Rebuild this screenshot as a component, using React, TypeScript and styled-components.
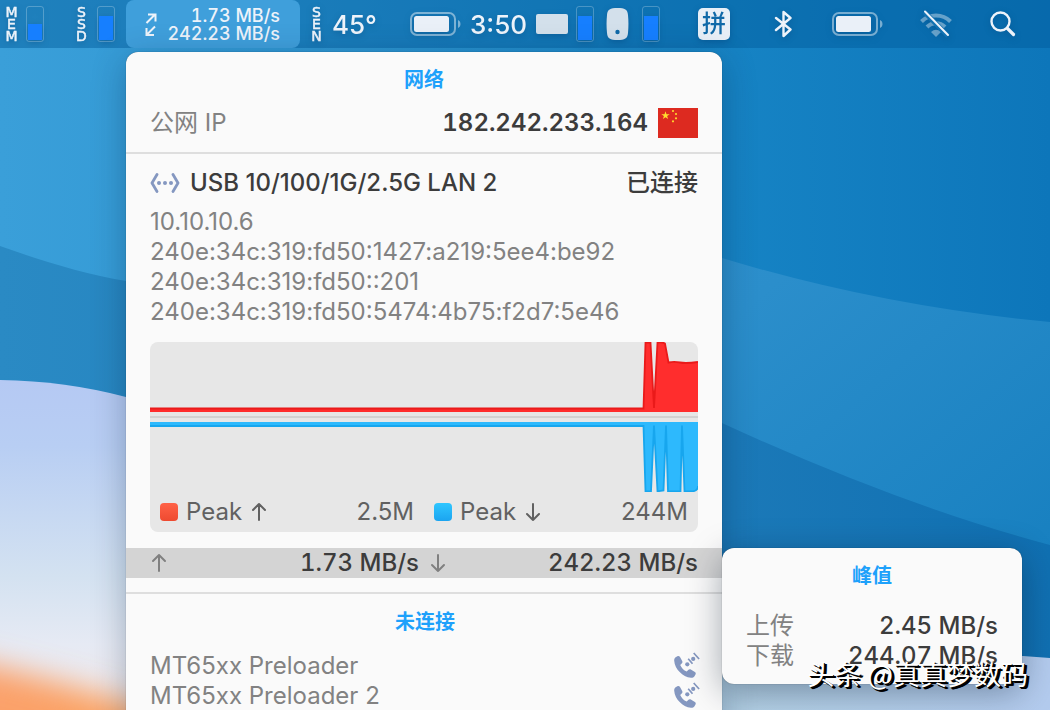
import React from "react";
import styled, { createGlobalStyle } from "styled-components";

const GlobalStyle = createGlobalStyle`
  *, *::before, *::after { box-sizing: border-box; }
  body {
    margin: 0;
    font-family: Inter, "Noto Sans CJK SC", sans-serif;
    color: #3c3c3c;
  }
  h2, h3, p, ul, dl, dt, dd { margin: 0; padding: 0; }
  ul { list-style: none; }
  button { font: inherit; color: inherit; border: 0; background: none; padding: 0; }
`;

const Desktop = styled.div`
  position: relative;
  display: flex;
  flex-direction: column;
  height: 100vh;
  overflow: hidden;
  background: #1680c2;
`;

const WallpaperSvg = styled.svg`
  position: absolute;
  inset: 0;
  width: 100%;
  height: 100%;
`;

const MenuBar = styled.nav`
  position: relative;
  flex: none;
  display: flex;
  align-items: center;
  height: 48px;
  padding-left: 6px;
  color: #edf3fa;
  background: rgba(0, 92, 156, 0.45);
`;

const MenuItem = styled.button<{ $gap?: number; $width?: number }>`
  display: flex;
  align-items: center;
  flex: none;
  height: 48px;
  margin-left: ${(p) => p.$gap ?? 0}px;
  width: ${(p) => (p.$width ? `${p.$width}px` : "auto")};
  filter: drop-shadow(0 2px 3px rgba(0, 50, 100, 0.3));
`;

const StackedLabel = styled.span`
  display: flex;
  flex-direction: column;
  align-items: center;
  width: 11px;
  font-family: "DejaVu Sans", sans-serif;
  font-size: 14px;
  line-height: 12px;
  -webkit-text-stroke: 0.5px currentColor;
`;

const Meter = styled.span<{ $gap?: number }>`
  display: flex;
  align-items: flex-end;
  width: 18px;
  height: 36px;
  margin-left: ${(p) => p.$gap ?? 0}px;
  padding: 1px;
  border: 1px solid rgba(255, 255, 255, 0.24);
  border-radius: 3px;
`;

const MeterFill = styled.span`
  width: 100%;
  background: #167fff;
`;

const NetworkItem = styled.button`
  display: flex;
  align-items: center;
  justify-content: space-between;
  flex: none;
  width: 174px;
  height: 48px;
  margin-left: 11px;
  padding: 2px 20px 0 18px;
  border-radius: 8px;
  background: #3f9fdb;
`;

const Speeds = styled.span`
  display: flex;
  flex-direction: column;
  align-items: flex-end;
  font-size: 18px;
  font-weight: 500;
  font-variant-numeric: tabular-nums;
  line-height: 18px;
`;

const MenuText = styled.span<{ $gap: number; $width: number }>`
  margin-left: ${(p) => p.$gap}px;
  width: ${(p) => p.$width}px;
  font-size: 26px;
  font-weight: 500;
  text-align: left;
  white-space: nowrap;
`;

const KeyboardGlyph = styled.span`
  width: 32px;
  height: 20px;
  border-radius: 2px;
  background: #d3e0eb;
`;

const InputMethod = styled.span`
  width: 32px;
  height: 32px;
  border-radius: 5px;
  background: #e8eff7;
  color: #1069a8;
  font-size: 24px;
  font-weight: 500;
  line-height: 31px;
`;

const Stage = styled.main`
  position: relative;
  flex: 1;
  min-height: 0;
  display: flex;
  padding: 4px 0 0 126px;
`;

const Panel = styled.section`
  flex: none;
  width: 596px;
  height: 100vh;
  border-radius: 12px 12px 0 0;
  background: #fafafa;
  box-shadow: 0 0 1px rgba(0, 0, 0, 0.5), 0 8px 34px rgba(0, 30, 60, 0.3);
`;

const Title = styled.h2`
  height: 30px;
  color: #1ea1fb;
  font-size: 20px;
  font-weight: 600;
  line-height: 32px;
  text-align: center;
`;

const PublicIp = styled.div`
  padding: 12px 24px 14px;
  border-bottom: 2px solid #dedede;
`;

const Row = styled.div`
  display: flex;
  align-items: center;
  justify-content: space-between;
  height: 30px;
  font-size: 24px;
  line-height: 30px;
`;

const IpRow = styled(Row)`
  margin-top: 14px;
`;

const Muted = styled.span`
  color: #828282;
`;

const Strong = styled.span<{ $figures?: boolean }>`
  display: flex;
  align-items: center;
  gap: 10px;
  font-weight: ${(p) => (p.$figures ? 600 : 500)};
  font-variant-numeric: ${(p) => (p.$figures ? "tabular-nums" : "normal")};
`;

const Adapter = styled.div`
  padding: 14px 24px 16px;
`;

const Addresses = styled.ul`
  margin: 9px 0 15px;
  color: #828282;
  font-size: 24px;
  line-height: 30px;
`;

const GraphCard = styled.figure`
  margin: 0;
  height: 190px;
  border-radius: 8px;
  overflow: hidden;
  background: #e7e7e7;
`;

const Chart = styled.svg`
  display: block;
  width: 100%;
  height: 150px;
`;

const Legend = styled.figcaption`
  display: grid;
  grid-template-columns: 1fr 1fr;
  column-gap: 20px;
  margin-top: 5px;
  padding: 0 10px;
  color: #616161;
  font-size: 24px;
  line-height: 30px;
`;

const LegendEntry = styled.div`
  display: flex;
  align-items: center;
  gap: 8px;
`;

const Swatch = styled.span<{ $from: string; $to: string }>`
  width: 18px;
  height: 18px;
  border-radius: 4px;
  background: linear-gradient(${(p) => p.$from}, ${(p) => p.$to});
`;

const LegendValue = styled.span`
  margin-left: auto;
`;

const Rates = styled.div`
  position: relative;
  display: grid;
  grid-template-columns: 1fr 1fr;
  column-gap: 10px;
  height: 30px;
  padding: 0 24px;
  background: #d4d4d4;
`;

const Rate = styled.div`
  display: flex;
  align-items: center;
  justify-content: space-between;
  color: #808080;
`;

const RateValue = styled.span`
  color: #3c3c3c;
  font-size: 24px;
  font-weight: 500;
  font-variant-numeric: tabular-nums;
  line-height: 30px;
`;

const PeakPopover = styled.aside`
  position: absolute;
  top: 0;
  left: 100%;
  width: 300px;
  padding: 12px 24px 13px;
  border-radius: 12px;
  background: #fafafa;
  box-shadow: 0 0 1px rgba(0, 0, 0, 0.5), 0 8px 34px rgba(0, 20, 40, 0.36);
`;

const PeakList = styled.dl`
  margin-top: 21px;
`;

const PeakTerm = styled.dt`
  color: #828282;
`;

const PeakValue = styled.dd`
  font-weight: 500;
  font-variant-numeric: tabular-nums;
`;

const Disconnected = styled.div`
  margin-top: 14px;
  padding: 12px 22px 0 24px;
  border-top: 2px solid #dedede;
`;

const DeviceList = styled.ul`
  margin-top: 15px;
`;

const Watermark = styled.p`
  position: absolute;
  right: 22px;
  bottom: 17px;
  color: #fff;
  font-family: "Noto Sans CJK SC", sans-serif;
  font-size: 27px;
  line-height: 38px;
  white-space: nowrap;
  text-shadow: 1px 1px 0 #000, 2px 2px 0 #000, 3px 2px 0 #000;
`;

function Wallpaper() {
  return (
    <WallpaperSvg viewBox="0 0 1050 710" preserveAspectRatio="none" aria-hidden="true">
      <defs>
        <linearGradient id="sky" x1="0" y1="0" x2="1" y2="0">
          <stop offset="0" stopColor="#3a9fd9" />
          <stop offset="0.3" stopColor="#2f97d3" />
          <stop offset="0.7" stopColor="#1683c4" />
          <stop offset="1" stopColor="#0d76ba" />
        </linearGradient>
        <linearGradient id="band" x1="0" y1="0" x2="1" y2="1">
          <stop offset="0" stopColor="#3494d0" />
          <stop offset="0.4" stopColor="#2b8ecb" />
          <stop offset="1" stopColor="#127cbd" />
        </linearGradient>
        <linearGradient id="deep" x1="0" y1="0" x2="1" y2="0">
          <stop offset="0" stopColor="#2a8ac4" />
          <stop offset="0.7" stopColor="#1b79b8" />
          <stop offset="1" stopColor="#1070b2" />
        </linearGradient>
        <linearGradient id="ice" x1="0" y1="380" x2="0" y2="710" gradientUnits="userSpaceOnUse">
          <stop offset="0" stopColor="#b5c9f3" />
          <stop offset="0.2" stopColor="#b8cef3" />
          <stop offset="0.6" stopColor="#d4e2f1" />
          <stop offset="0.8" stopColor="#e6eaf4" />
          <stop offset="1" stopColor="#f0e9ec" />
        </linearGradient>
        <linearGradient id="iceRight" x1="700" y1="0" x2="1050" y2="0" gradientUnits="userSpaceOnUse">
          <stop offset="0" stopColor="#b5d3e6" />
          <stop offset="1" stopColor="#b3cbee" />
        </linearGradient>
        <linearGradient id="glow" x1="0" y1="0" x2="1" y2="0">
          <stop offset="0" stopColor="#fba06f" />
          <stop offset="1" stopColor="#fba35a" />
        </linearGradient>
        <filter id="soft" x="-20%" y="-60%" width="140%" height="220%">
          <feGaussianBlur stdDeviation="15" />
        </filter>
      </defs>
      <rect width="1050" height="710" fill="url(#sky)" />
      <path d="M400 160Q570 222 722 258Q880 306 1050 322V710H400Z" fill="url(#band)" />
      <path d="M0 246C42 261 84 274 126 281C300 300 500 345 722 423Q900 505 1050 545V710H0Z" fill="url(#deep)" />
      <path d="M0 380Q66 381 126 397Q240 430 330 520V710H0Z" fill="url(#ice)" />
      <path d="M600 640Q820 640 1050 658V710H600Z" fill="url(#iceRight)" />
      <path d="M-60 654Q60 680 200 726V800H-60Z" fill="url(#glow)" filter="url(#soft)" />
    </WallpaperSvg>
  );
}

function BatteryIcon() {
  return (
    <svg width="51" height="24" viewBox="0 0 51 24" aria-hidden="true">
      <rect x="1" y="1" width="44" height="22" rx="6" fill="none" stroke="#fff" strokeOpacity="0.45" strokeWidth="2" />
      <rect x="4" y="4" width="35" height="16" rx="2.5" fill="#eaf0f8" />
      <path d="M48 8c3.3 1.300 3.300 6.700 0 8z" fill="#fff" fillOpacity="0.45" />
    </svg>
  );
}

function SpeedArrows() {
  return (
    <svg width="14" height="24" viewBox="0 0 14 24" fill="none" stroke="currentColor" strokeWidth="2" aria-hidden="true">
      <path d="M2.500 10 11 1.500M4 1.500h7.500v7" />
      <path d="M11 13.500 2.500 22M2.500 15v7h7.500" />
    </svg>
  );
}

function ArrowIcon({ down = false }: { down?: boolean }) {
  return (
    <svg width="18" height="20" viewBox="0 0 18 20" fill="none" stroke="currentColor" strokeWidth="2" strokeLinecap="round" strokeLinejoin="round" aria-hidden="true">
      <path d={down ? "M9 2v16M3 12 9 18l6-6" : "M9 18V2M3 8 9 2l6 6"} />
    </svg>
  );
}

function MouseIcon() {
  return (
    <svg width="23" height="32" viewBox="0 0 23 32" aria-hidden="true">
      <path d="M11.500 0C19 0 21.500 1.500 22 7c.6 6 .6 12 0 18-.5 5.500-3 7-10.500 7S1.500 30.500 1 25C.4 19 .4 13 1 7 1.500 1.500 4 0 11.500 0z" fill="#d3e0eb" />
      <circle cx="11.500" cy="24" r="2.200" fill="#1069a8" />
    </svg>
  );
}

function BluetoothIcon() {
  return (
    <svg width="20" height="28" viewBox="0 0 20 28" fill="none" stroke="currentColor" strokeWidth="2.400" strokeLinejoin="round" strokeLinecap="round" aria-hidden="true">
      <path d="M2 8 16.500 19.500l-7 6.500V2l7 6L2 20" />
    </svg>
  );
}

function WifiOffIcon() {
  return (
    <svg width="32" height="28" viewBox="0 0 32 28" fill="none" aria-hidden="true">
      <g stroke="#fff" strokeOpacity="0.38" strokeWidth="4">
        <path d="M1.500 11.500a20.500 20.500 0 0 1 29 0" />
        <path d="M7 17a12.800 12.800 0 0 1 18 0" />
      </g>
      <path d="M11 22q5-4.500 10 0l-5 5z" fill="#fff" fillOpacity="0.38" />
      <path d="M4.500 2 28 26" stroke="#1272b2" strokeWidth="5" />
      <path d="M5 1.500 28 25" stroke="#edf3fa" strokeWidth="2" strokeLinecap="round" />
    </svg>
  );
}

function SearchIcon() {
  return (
    <svg width="26" height="26" viewBox="0 0 26 26" fill="none" stroke="currentColor" strokeLinecap="round" aria-hidden="true">
      <circle cx="10.500" cy="10.500" r="9" strokeWidth="2.400" />
      <path d="m17.500 17.500 6 6" strokeWidth="3.200" />
    </svg>
  );
}

function EthernetIcon() {
  return (
    <svg width="30" height="20" viewBox="0 0 30 20" fill="none" aria-hidden="true">
      <path d="M7 1.500 2 10l5 8.500M23 1.500 28 10l-5 8.500" stroke="#8497c0" strokeWidth="2.800" strokeLinecap="round" strokeLinejoin="round" />
      <g fill="#8497c0">
        <circle cx="9" cy="10" r="2" />
        <circle cx="15" cy="10" r="2" />
        <circle cx="21" cy="10" r="2" />
      </g>
    </svg>
  );
}

function ModemIcon() {
  return (
    <svg width="26" height="28" viewBox="0 0 26 28" fill="#8497c0" aria-hidden="true">
      <path d="M1.600 5.300 3.400 4.300C4.400 3.800 5.400 4.100 6 5L8.200 9c.5.900.3 1.900-.5 2.600l-1.500 1.300c1.300 3 3.500 5.200 6.500 6.600l1.500-1.500c.7-.7 1.700-.9 2.600-.4l4.100 2.400c.9.500 1.100 1.600.6 2.500l-1.200 1.900c-.7 1.100-2 1.600-3.400 1.400C8.600 24.700.9 17.300.2 8.700c-.1-1.400.3-2.700 1.400-3.400z" />
      <circle cx="13.300" cy="12.300" r="2.100" />
      <circle cx="19.200" cy="6.900" r="2.100" />
      <path d="M14.200 6.800l4.300 5M19.700 1l5.400 6" fill="none" stroke="#8497c0" strokeWidth="1.700" />
    </svg>
  );
}

function ChinaFlag() {
  return (
    <svg width="40" height="30" viewBox="0 0 40 30" role="img" aria-label="中国">
      <rect width="40" height="30" fill="#dd2a20" />
      <path d="m7.500 3.200 1 3h3.200L9.100 8l1 3.100-2.600-1.900-2.600 1.900 1-3.100-2.600-1.800h3.200z" fill="#ffde2e" />
      <g fill="#ffd52e">
        <circle cx="15" cy="3" r="1.100" />
        <circle cx="18" cy="6" r="1.100" />
        <circle cx="18" cy="10.300" r="1.100" />
        <circle cx="15" cy="13.300" r="1.100" />
      </g>
    </svg>
  );
}

function TrafficChart() {
  const up = "M0 66.500H493.500L495.500 0.500H500.500L504 66L507.500 0.500Q512 0 515 1.500L518.500 20.500Q524 19.300 530 20.500T548 20";
  const down = "M0 84H493.500L495.500 149.300H501L504 83.500L507.500 149.300L513.500 148.500L516 83.500L518 149.300H530.500L532 83.500L534.500 149.300H543Q548 148.500 548 144";
  return (
    <Chart viewBox="0 0 548 150" preserveAspectRatio="none" role="img" aria-label="网络">
      <path d={`${up}V70H0Z`} fill="#ff2d2d" />
      <path d={up} fill="none" stroke="#ea1a1a" strokeWidth="1.800" />
      <rect y="74" width="548" height="2" fill="#d2d2d2" />
      <path d={`${down}V80H0Z`} fill="#2db9fd" />
      <path d={down} fill="none" stroke="#17a6ee" strokeWidth="1.800" />
    </Chart>
  );
}

function Letters({ text }: { text: string }) {
  return (
    <StackedLabel>
      {text.split("").map((c, i) => (
        <span key={i}>{c}</span>
      ))}
    </StackedLabel>
  );
}

function Gauge({ level, gap }: { level: number; gap?: number }) {
  return (
    <Meter $gap={gap}>
      <MeterFill style={{ height: `${level}%` }} />
    </Meter>
  );
}

const addresses = [
  "10.10.10.6",
  "240e:34c:319:fd50:1427:a219:5ee4:be92",
  "240e:34c:319:fd50::201",
  "240e:34c:319:fd50:5474:4b75:f2d7:5e46",
];

const devices = ["MT65xx Preloader", "MT65xx Preloader 2"];

export default function App() {
  return (
    <>
      <GlobalStyle />
      <Desktop>
        <Wallpaper />
        <MenuBar>
          <MenuItem $width={38}>
            <Letters text="MEM" />
            <Gauge level={50} gap={9} />
          </MenuItem>
          <MenuItem $gap={32} $width={39}>
            <Letters text="SSD" />
            <Gauge level={75} gap={10} />
          </MenuItem>
          <NetworkItem>
            <SpeedArrows />
            <Speeds>
              <span>1.73 MB/s</span>
              <span>242.23 MB/s</span>
            </Speeds>
          </NetworkItem>
          <MenuItem $gap={11} $width={65}>
            <Letters text="SEN" />
            <MenuText $gap={10} $width={44}>45°</MenuText>
          </MenuItem>
          <MenuItem $gap={34} $width={116}>
            <BatteryIcon />
            <MenuText $gap={9} $width={56}>3:50</MenuText>
          </MenuItem>
          <MenuItem $gap={10} aria-label="Keyboard">
            <KeyboardGlyph />
            <Gauge level={75} gap={8} />
          </MenuItem>
          <MenuItem $gap={12} aria-label="Mouse">
            <MouseIcon />
            <Gauge level={75} gap={13} />
          </MenuItem>
          <MenuItem $gap={38}>
            <InputMethod>拼</InputMethod>
          </MenuItem>
          <MenuItem $gap={44} aria-label="Bluetooth">
            <BluetoothIcon />
          </MenuItem>
          <MenuItem $gap={38} aria-label="Battery">
            <BatteryIcon />
          </MenuItem>
          <MenuItem $gap={37} aria-label="Wi-Fi">
            <WifiOffIcon />
          </MenuItem>
          <MenuItem $gap={38} aria-label="Search">
            <SearchIcon />
          </MenuItem>
        </MenuBar>
        <Stage>
          <Panel>
            <PublicIp>
              <Title>网络</Title>
              <IpRow>
                <Muted>公网 IP</Muted>
                <Strong $figures>
                  182.242.233.164
                  <ChinaFlag />
                </Strong>
              </IpRow>
            </PublicIp>
            <Adapter>
              <Row>
                <Strong>
                  <EthernetIcon />
                  USB 10/100/1G/2.5G LAN 2
                </Strong>
                <Strong>已连接</Strong>
              </Row>
              <Addresses>
                {addresses.map((a) => (
                  <li key={a}>{a}</li>
                ))}
              </Addresses>
              <GraphCard>
                <TrafficChart />
                <Legend>
                  <LegendEntry>
                    <Swatch $from="#ff6247" $to="#ee4a30" />
                    Peak
                    <ArrowIcon />
                    <LegendValue>2.5M</LegendValue>
                  </LegendEntry>
                  <LegendEntry>
                    <Swatch $from="#2fc6ff" $to="#1ba4f0" />
                    Peak
                    <ArrowIcon down />
                    <LegendValue>244M</LegendValue>
                  </LegendEntry>
                </Legend>
              </GraphCard>
            </Adapter>
            <Rates>
              <Rate>
                <ArrowIcon />
                <RateValue>1.73 MB/s</RateValue>
              </Rate>
              <Rate>
                <ArrowIcon down />
                <RateValue>242.23 MB/s</RateValue>
              </Rate>
              <PeakPopover>
                <Title>峰值</Title>
                <PeakList>
                  <Row>
                    <PeakTerm>上传</PeakTerm>
                    <PeakValue>2.45 MB/s</PeakValue>
                  </Row>
                  <Row>
                    <PeakTerm>下载</PeakTerm>
                    <PeakValue>244.07 MB/s</PeakValue>
                  </Row>
                </PeakList>
              </PeakPopover>
            </Rates>
            <Disconnected>
              <Title>未连接</Title>
              <DeviceList>
                {devices.map((d) => (
                  <li key={d}>
                    <Row>
                      <Muted>{d}</Muted>
                      <ModemIcon />
                    </Row>
                  </li>
                ))}
              </DeviceList>
            </Disconnected>
          </Panel>
        </Stage>
        <Watermark>头条 @真真梦数码</Watermark>
      </Desktop>
    </>
  );
}
